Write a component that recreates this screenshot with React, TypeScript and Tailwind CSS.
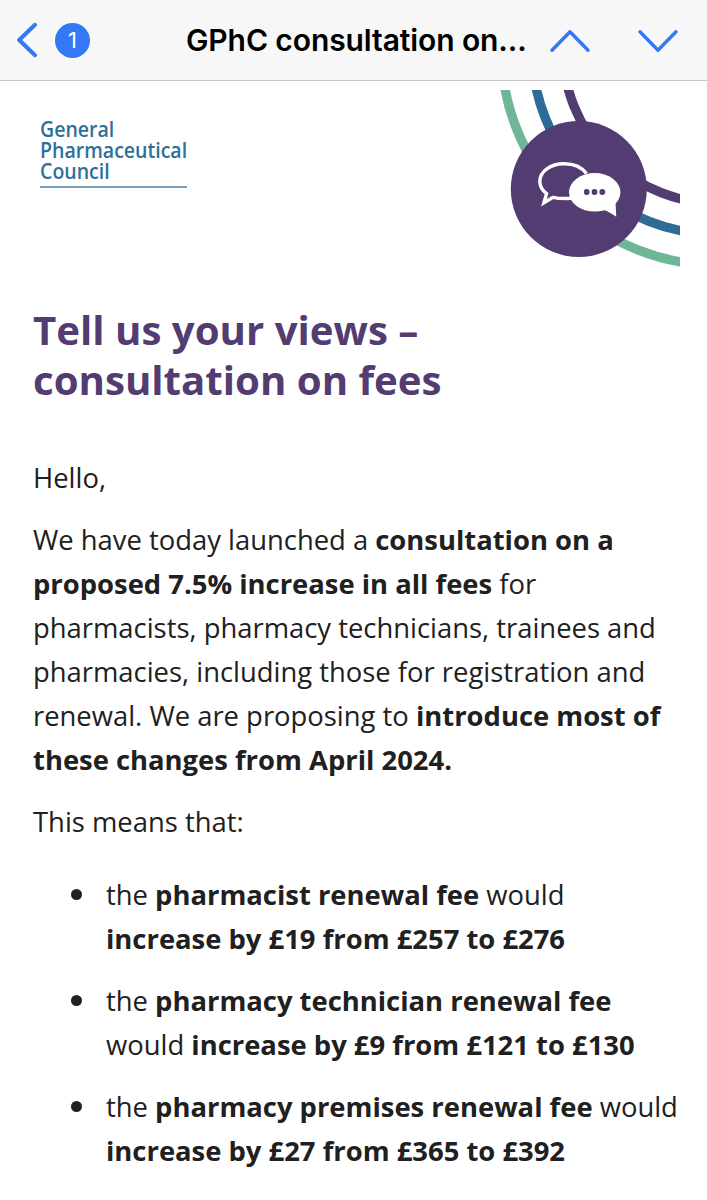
import type { ReactNode } from "react";

const feeChanges: { id: string; body: ReactNode }[] = [
  {
    id: "pharmacist",
    body: (
      <>
        the <b>pharmacist renewal fee</b> would
        <br />
        <b>increase by £19 from £257 to £276</b>
      </>
    ),
  },
  {
    id: "technician",
    body: (
      <>
        the <b>pharmacy technician renewal fee</b>
        <br />
        would <b>increase by £9 from £121 to £130</b>
      </>
    ),
  },
  {
    id: "premises",
    body: (
      <>
        the <b>pharmacy premises renewal fee</b> would
        <br />
        <b>increase by £27 from £365 to £392</b>
      </>
    ),
  },
];

function MailHeader() {
  return (
    <header className="flex h-[81px] items-center border-b border-[#c9c7c8] bg-[#f7f7f7] pl-4 pr-[27px] font-[Inter,sans-serif]">
      <button aria-label="Back" className="shrink-0">
        <svg width="24" height="36" viewBox="0 0 24 36" fill="none" stroke="#3478f6" strokeWidth="4" strokeLinecap="round" strokeLinejoin="round">
          <path d="M19 2.8 3.2 18 19 33.2" />
        </svg>
      </button>
      <span className="ml-[15px] flex size-[35px] shrink-0 items-center justify-center rounded-full bg-[#3478f6] text-[22px] text-white">
        1
      </span>
      <h1 className="ml-24 w-[350px] shrink-0 whitespace-nowrap text-[30px] font-semibold tracking-[-0.1px] text-black">
        GPhC consultation on...
      </h1>
      <button aria-label="Previous message" className="ml-3 shrink-0">
        <svg width="44" height="28" viewBox="0 0 44 28" fill="none" stroke="#3478f6" strokeWidth="3.4" strokeLinecap="round" strokeLinejoin="round">
          <path d="M4 24.3 22 5.7l18 18.6" />
        </svg>
      </button>
      <button aria-label="Next message" className="ml-auto shrink-0">
        <svg width="44" height="28" viewBox="0 0 44 28" fill="none" stroke="#3478f6" strokeWidth="3.4" strokeLinecap="round" strokeLinejoin="round">
          <path d="M4 5.7 22 24.3 40 5.7" />
        </svg>
      </button>
    </header>
  );
}

function Logo() {
  return (
    <div className="mt-[29px] w-[147px] border-b-2 border-[#7b9dba] pb-1">
      <div className="origin-left scale-x-93 whitespace-nowrap text-[21px] font-semibold leading-[21px] text-[#2e7099]">
        General
        <br />
        Pharmaceutical
        <br />
        Council
      </div>
    </div>
  );
}

function ConsultationGraphic() {
  return (
    <svg width="190" height="180" viewBox="490 90 190 180" fill="none">
      <g strokeWidth="9.4">
        <circle cx="717.3" cy="49" r="216" stroke="#6fb598" />
        <circle cx="717.3" cy="49" r="185.3" stroke="#2c6c97" />
        <circle cx="717.3" cy="49" r="154.3" stroke="#523c71" />
      </g>
      <circle cx="578.8" cy="189" r="68" fill="#523c71" />
      <path
        d="M586.5 173.5C582 167.5 573.5 163.7 564 163.7c-13.5 0-24.2 7.8-24.2 17.6 0 5 2.6 9.3 6.8 12.3L543.9 202.8 553 197.300c4 1 11 1.400 18 1.100"
        stroke="#fff"
        strokeWidth="3.4"
      />
      <ellipse cx="594.7" cy="192.3" rx="25.7" ry="19.3" fill="#fff" />
      <path d="M604 210c4.5 1.5 8 4 12.3 6.7L615.5 203z" fill="#fff" />
      <g fill="#523c71">
        <circle cx="586.7" cy="192" r="2.9" />
        <circle cx="594.5" cy="192" r="2.9" />
        <circle cx="602.3" cy="192" r="2.9" />
      </g>
    </svg>
  );
}

export default function App() {
  return (
    <div className="h-[1200px] w-[707px] overflow-hidden bg-white font-['Open_Sans',sans-serif] text-[#202020]">
      <MailHeader />

      <div className="flex items-start justify-between pl-10 pr-[27px] pt-[9px]">
        <Logo />
        <ConsultationGraphic />
      </div>

      <main className="pl-[33px] text-[27.4px] leading-[44px]">
        <h2 className="mt-[35px] text-[40.2px] font-bold leading-[49.5px] text-[#523c71]">
          Tell us your views –
          <br />
          consultation on fees
        </h2>
        <p className="mt-[52px]">Hello,</p>
        <p className="mt-[18px]">
          We have today launched a <b>consultation on a</b>
          <br />
          <b>proposed 7.5% increase in all fees</b> for
          <br />
          pharmacists, pharmacy technicians, trainees and
          <br />
          pharmacies, including those for registration and
          <br />
          renewal. We are proposing to <b>introduce most of</b>
          <br />
          <b>these changes from April 2024.</b>
        </p>
        <p className="mt-[18px]">This means that:</p>
        <ul className="mt-[29px] flex flex-col gap-[18px] pl-[38px]">
          {feeChanges.map((item) => (
            <li key={item.id} className="flex">
              <span className="mr-6 mt-4 size-[11px] shrink-0 rounded-full bg-[#202020]" />
              <div className="whitespace-nowrap">{item.body}</div>
            </li>
          ))}
        </ul>
      </main>
    </div>
  );
}
